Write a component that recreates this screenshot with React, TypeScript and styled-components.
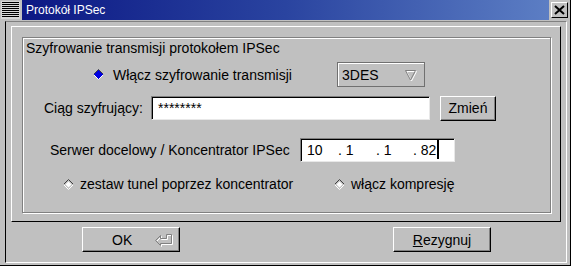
import React from 'react';
import styled, { createGlobalStyle } from 'styled-components';

const Global = createGlobalStyle`
  html, body {
    margin: 0;
    padding: 0;
    background: #c0c0c0;
  }
  body {
    font-family: 'Liberation Sans', Arial, sans-serif;
    color: #000;
  }
`;

const Window = styled.div`
  width: 571px;
  height: 266px;
  box-sizing: border-box;
  display: flex;
  flex-direction: column;
  background: #c0c0c0;
  border-right: 1px solid #000;
  border-bottom: 1px solid #000;
`;

const TitleBar = styled.div`
  height: 20px;
  display: flex;
  align-items: stretch;
`;

const MenuButton = styled.div`
  width: 22px;
  display: flex;
  align-items: center;
  padding-left: 1px;
  box-sizing: border-box;
`;

const Caption = styled.div`
  flex: 1;
  background: linear-gradient(to right, #0c1884 0%, #2a44a0 50%, #5c7ec4 100%);
  color: #fff;
  font-size: 12px;
  line-height: 20px;
  padding-left: 4px;
  white-space: nowrap;
`;

const CloseButton = styled.div`
  width: 17px;
  height: 16px;
  margin: 2px 2px 0 2px;
  box-sizing: border-box;
  border-top: 1px solid #fff;
  border-left: 1px solid #fff;
  border-right: 1px solid #000;
  border-bottom: 1px solid #000;
  display: flex;
  align-items: center;
  justify-content: center;
`;

const ClientFrame = styled.div`
  flex: 1;
  margin: 1px 3px 2px 5px;
  border-left: 1px solid #000;
  border-top: 1px solid #808080;
  border-right: 1px solid #fff;
  border-bottom: 1px solid #fff;
  display: flex;
  flex-direction: column;
`;

const Panel = styled.div`
  margin: 4px 5px 0 5px;
  height: 196px;
  box-sizing: border-box;
  border-top: 1px solid #fff;
  border-left: 1px solid #fff;
  border-right: 1px solid #000;
  border-bottom: 1px solid #000;
  padding: 10px 9px 8px 10px;
  display: flex;
`;

const GroupBox = styled.div`
  flex: 1;
  border: 1px solid #808080;
  box-shadow: 1px 1px 0 #fff, inset 1px 1px 0 #fff;
  display: flex;
  flex-direction: column;
`;

const Legend = styled.div`
  margin-top: 2px;
  padding-left: 3px;
  height: 16px;
  font-size: 14px;
  line-height: 16px;
`;

const Row = styled.div<{ $indent: number; $top: number; $h: number }>`
  display: flex;
  align-items: center;
  margin-top: ${(p) => p.$top}px;
  height: ${(p) => p.$h}px;
  padding-left: ${(p) => p.$indent}px;
  font-size: 14px;
`;

const Option = styled.div<{ $w?: number; $gap: number }>`
  display: flex;
  align-items: center;
  gap: ${(p) => p.$gap}px;
  width: ${(p) => (p.$w ? `${p.$w}px` : 'auto')};
  white-space: nowrap;
`;

const Label = styled.div<{ $w: number }>`
  width: ${(p) => p.$w}px;
  white-space: nowrap;
`;

const Combo = styled.div`
  width: 88px;
  height: 25px;
  box-sizing: border-box;
  border: 1px solid #707070;
  box-shadow: inset 1px 1px 0 #fff;
  display: flex;
  align-items: center;
  justify-content: space-between;
  padding: 0 7px 0 4px;
`;

const TextField = styled.div<{ $w: number }>`
  width: ${(p) => p.$w}px;
  height: 24px;
  box-sizing: border-box;
  background: #fff;
  border-top: 1px solid #808080;
  border-left: 1px solid #808080;
  border-right: 1px solid #e8e8e8;
  border-bottom: 1px solid #e8e8e8;
  box-shadow: inset 1px 1px 0 #000;
  display: flex;
  align-items: center;
  padding-left: 6px;
  font-size: 14px;
  white-space: nowrap;
`;

const Octet = styled.span<{ $w: number }>`
  display: inline-block;
  width: ${(p) => p.$w}px;
`;

const Caret = styled.span`
  display: inline-block;
  width: 2px;
  height: 19px;
  background: #000;
  margin-left: 1px;
`;

const Button = styled.div<{ $w: number }>`
  width: ${(p) => p.$w}px;
  height: 25px;
  box-sizing: border-box;
  border-top: 1px solid #fff;
  border-left: 1px solid #fff;
  border-right: 1px solid #000;
  border-bottom: 1px solid #000;
  box-shadow: inset -1px -1px 0 #808080;
  display: flex;
  align-items: center;
  justify-content: center;
  font-size: 14px;
`;

const OkButton = styled(Button)`
  justify-content: flex-start;
  padding-left: 29px;
  gap: 23px;
`;

const ButtonRow = styled.div`
  display: flex;
  justify-content: space-between;
  padding: 5px 75px 0 76px;
`;

const Mnemonic = styled.span`
  text-decoration: underline;
`;

const Diamond = ({ on }: { on?: boolean }) => (
  <svg width="11" height="11" viewBox="0 0 11 11">
    <polygon points="5.5,0.5 10.5,5.5 5.5,10.5 0.5,5.5" fill={on ? '#0000e0' : '#c0c0c0'} />
    <polyline points="0.5,5.5 5.5,0.5 10.5,5.5" fill="none" stroke="#404040" />
    <polyline points="0.5,5.5 5.5,10.5 10.5,5.5" fill="none" stroke="#fff" />
    {!on && <polygon points="5.5,2.5 8.5,5.5 5.5,8.5 2.5,5.5" fill="#fff" />}
  </svg>
);

const MenuIcon = () => (
  <svg width="19" height="18" viewBox="0 0 19 18">
    <rect x="0" y="0" width="19" height="18" fill="#d8d8d8" />
    {[1, 3, 5, 7, 9, 11, 13, 15].map((y) => (
      <rect key={y} x="1" y={y} width="17" height="1" fill="#000" />
    ))}
  </svg>
);

const CloseIcon = () => (
  <svg width="11" height="10" viewBox="0 0 11 10">
    <path d="M1 1 L10 9 M10 1 L1 9" stroke="#000" strokeWidth="2" />
  </svg>
);

const DropArrow = () => (
  <svg width="13" height="12" viewBox="0 0 13 12">
    <polygon points="1.5,1.5 11.5,1.5 6.5,11" fill="none" stroke="#fff" transform="translate(1,1)" />
    <polygon points="1.5,1.5 11.5,1.5 6.5,11" fill="none" stroke="#808080" />
  </svg>
);

const ReturnIcon = () => (
  <svg width="18" height="14" viewBox="0 0 18 14">
    <path d="M0.5 7.5 L5.5 2.5 L5.5 5.5 L11.5 5.5 L11.5 1.5 L16.5 1.5 L16.5 10.5 L5.5 10.5 L5.5 12.5 Z" fill="none" stroke="#fff" transform="translate(1,1)" />
    <path d="M0.5 7.5 L5.5 2.5 L5.5 5.5 L11.5 5.5 L11.5 1.5 L16.5 1.5 L16.5 10.5 L5.5 10.5 L5.5 12.5 Z" fill="none" stroke="#808080" />
  </svg>
);

export default function App() {
  return (
    <>
      <Global />
      <Window>
        <TitleBar>
          <MenuButton>
            <MenuIcon />
          </MenuButton>
          <Caption>Protokół IPSec</Caption>
          <CloseButton>
            <CloseIcon />
          </CloseButton>
        </TitleBar>
        <ClientFrame>
          <Panel>
            <GroupBox>
              <Legend>Szyfrowanie transmisji protokołem IPSec</Legend>
              <Row $indent={70} $top={6} $h={25}>
                <Option $w={244} $gap={9}>
                  <Diamond on />
                  Włącz szyfrowanie transmisji
                </Option>
                <Combo>
                  <span>3DES</span>
                  <DropArrow />
                </Combo>
              </Row>
              <Row $indent={21} $top={8} $h={26}>
                <Label $w={107}>Ciąg szyfrujący:</Label>
                <TextField $w={279}>********</TextField>
                <Button $w={56} style={{ marginLeft: 10 }}>
                  Zmień
                </Button>
              </Row>
              <Row $indent={27} $top={16} $h={25}>
                <Label $w={250}>Serwer docelowy / Koncentrator IPSec</Label>
                <TextField $w={155}>
                  <Octet $w={31}>10</Octet>
                  <Octet $w={38}>. 1</Octet>
                  <Octet $w={37}>. 1</Octet>
                  <span>. 82</span>
                  <Caret />
                </TextField>
              </Row>
              <Row $indent={40} $top={14} $h={16}>
                <Option $w={271} $gap={6}>
                  <Diamond />
                  zestaw tunel poprzez koncentrator
                </Option>
                <Option $gap={6}>
                  <Diamond />
                  włącz kompresję
                </Option>
              </Row>
            </GroupBox>
          </Panel>
          <ButtonRow>
            <OkButton $w={98}>
              <span>OK</span>
              <ReturnIcon />
            </OkButton>
            <Button $w={98}>
              <span>
                <Mnemonic>R</Mnemonic>ezygnuj
              </span>
            </Button>
          </ButtonRow>
        </ClientFrame>
      </Window>
    </>
  );
}
